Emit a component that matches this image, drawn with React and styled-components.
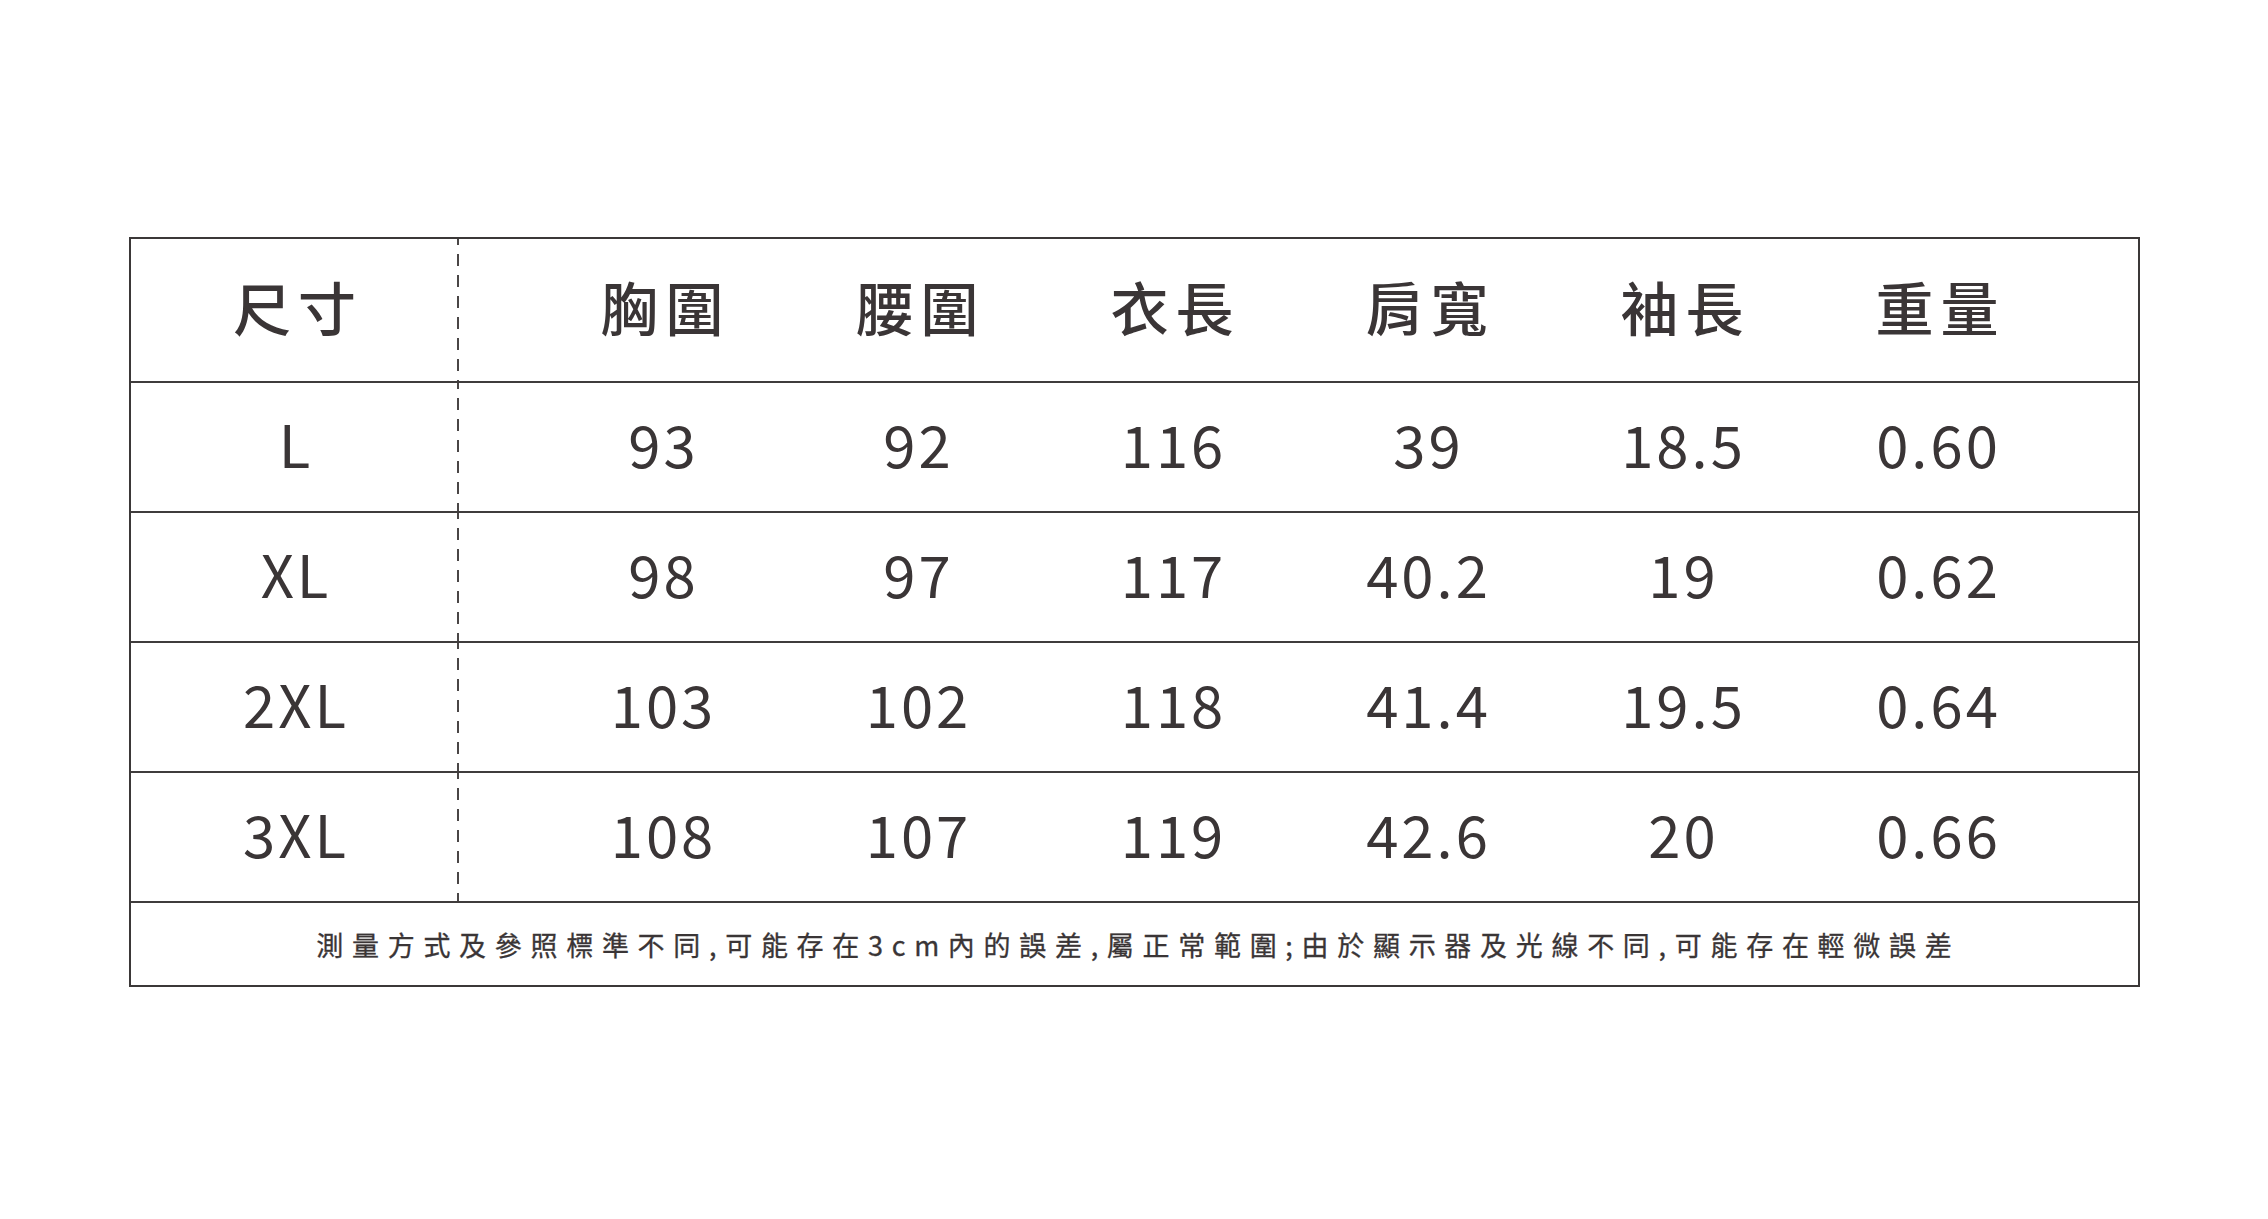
import React from "react";
import styled, { createGlobalStyle } from "styled-components";

const Global = createGlobalStyle`
  html, body { margin: 0; padding: 0; background: #ffffff; }
  body { font-family: "Noto Sans CJK TC", "Noto Sans", sans-serif; color: #3a3536; }
`;

const Page = styled.div`
  width: 2268px;
  height: 1219px;
  padding-top: 237px;
  box-sizing: border-box;
`;

const Table = styled.div`
  width: 2011px;
  margin: 0 auto;
  border: 2px solid #3b3838;
  box-sizing: border-box;
`;

const Row = styled.div`
  display: flex;
  height: ${(p) => p.$h}px;
  border-bottom: 2px solid #3f3c3c;
`;

const SizeCell = styled.div`
  width: 328px;
  flex: none;
  display: flex;
  align-items: center;
  justify-content: center;
  background-image: linear-gradient(to bottom, #4a4646 57%, transparent 57%);
  background-size: 2px 21px;
  background-repeat: repeat-y;
  background-position: right -6px;
`;

const DataArea = styled.div`
  display: flex;
  padding-left: 76px;
`;

const Cell = styled.div`
  width: 255px;
  flex: none;
  display: flex;
  align-items: center;
  justify-content: center;
`;

const Text = styled.span`
  font-size: 58px;
  font-weight: ${(p) => (p.$head ? 500 : 400)};
  letter-spacing: ${(p) => (p.$head ? 7 : 3)}px;
  padding-left: ${(p) => (p.$head ? 7 : 3)}px;
  padding-bottom: 8px;
  line-height: 1;
  color: #3a3536;
`;

const Footer = styled.div`
  height: 82px;
  display: flex;
  align-items: center;
  justify-content: center;
`;

const Note = styled.span`
  font-size: 27px;
  letter-spacing: 8.7px;
  padding-left: 8.7px;
  color: #3a3536;
  line-height: 1;
  -webkit-text-stroke: 0.3px #3a3536;
`;

const headers = ["胸圍", "腰圍", "衣長", "肩寬", "袖長", "重量"];
const rows = [
  ["L", "93", "92", "116", "39", "18.5", "0.60"],
  ["XL", "98", "97", "117", "40.2", "19", "0.62"],
  ["2XL", "103", "102", "118", "41.4", "19.5", "0.64"],
  ["3XL", "108", "107", "119", "42.6", "20", "0.66"],
];

export default function App() {
  return (
    <>
      <Global />
      <Page>
        <Table>
          <Row $h={142}>
            <SizeCell>
              <Text $head>尺寸</Text>
            </SizeCell>
            <DataArea>
              {headers.map((h) => (
                <Cell key={h}>
                  <Text $head>{h}</Text>
                </Cell>
              ))}
            </DataArea>
          </Row>
          {rows.map((r) => (
            <Row key={r[0]} $h={128}>
              <SizeCell>
                <Text>{r[0]}</Text>
              </SizeCell>
              <DataArea>
                {r.slice(1).map((v, i) => (
                  <Cell key={i}>
                    <Text>{v}</Text>
                  </Cell>
                ))}
              </DataArea>
            </Row>
          ))}
          <Footer>
            <Note>測量方式及參照標準不同,可能存在3cm內的誤差,屬正常範圍;由於顯示器及光線不同,可能存在輕微誤差</Note>
          </Footer>
        </Table>
      </Page>
    </>
  );
}
